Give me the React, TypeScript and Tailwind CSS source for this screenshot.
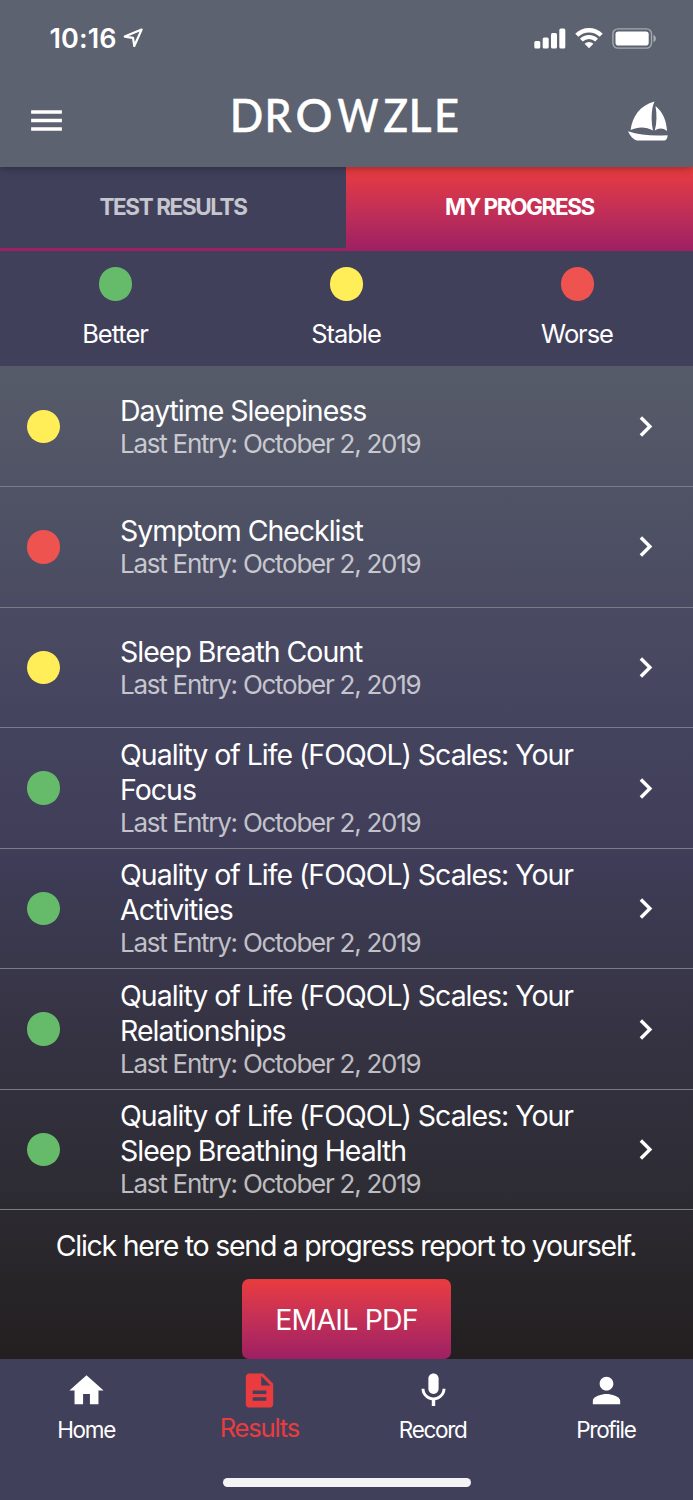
import type { ReactNode } from "react";
import { MdChevronRight, MdDescription, MdHome, MdMenu, MdMic, MdPerson } from "react-icons/md";
import { clsx } from "clsx";

type Status = "better" | "stable" | "worse";

interface Entry {
    title: string;
    date: string;
    status: Status;
}

const dotColors: Record<Status, string> = {
    better: "bg-[#66bb6a]",
    stable: "bg-[#ffee58]",
    worse: "bg-[#ef5350]",
};

const entries: Entry[] = [
    { title: "Daytime Sleepiness", date: "October 2, 2019", status: "stable" },
    { title: "Symptom Checklist", date: "October 2, 2019", status: "worse" },
    { title: "Sleep Breath Count", date: "October 2, 2019", status: "stable" },
    { title: "Quality of Life (FOQOL) Scales: Your Focus", date: "October 2, 2019", status: "better" },
    { title: "Quality of Life (FOQOL) Scales: Your Activities", date: "October 2, 2019", status: "better" },
    { title: "Quality of Life (FOQOL) Scales: Your Relationships", date: "October 2, 2019", status: "better" },
    { title: "Quality of Life (FOQOL) Scales: Your Sleep Breathing Health", date: "October 2, 2019", status: "better" },
];

function Dot({ status }: { status: Status }) {
    return <span className={clsx("block size-[33.6px] shrink-0 rounded-full", dotColors[status])} />;
}

function StatusBar() {
    return (
        <div className="flex h-[76px] items-center justify-between pl-[49.5px] pr-[36px]">
            <div className="flex items-center gap-[6px]">
                <span className="text-[27px] font-semibold leading-none tracking-[0.1px]">10:16</span>
                <svg width="20" height="20" viewBox="0 0 20 20" fill="none">
                    <path d="M18.6 1.6 L1.8 8.6 L10 9.9 L11.3 18 Z" stroke="white" strokeWidth="2.2" strokeLinejoin="round" />
                </svg>
            </div>
            <div className="flex items-center">
                <svg width="32" height="21" viewBox="0 0 32 21" fill="white">
                    <rect x="0.3" y="13" width="6" height="7.5" rx="1.5" />
                    <rect x="8.7" y="9.5" width="6" height="11" rx="1.5" />
                    <rect x="17" y="5" width="6" height="15.5" rx="1.5" />
                    <rect x="25.3" y="0.5" width="6" height="20" rx="1.5" />
                </svg>
                <svg className="ml-[9px]" width="28" height="21" viewBox="0 0 28 21" fill="none" stroke="white">
                    <path d="M1.8 7.3 A17.3 17.3 0 0 1 26.2 7.3" strokeWidth="4.4" />
                    <path d="M6.4 12.2 A10.8 10.8 0 0 1 21.6 12.2" strokeWidth="4" />
                    <path d="M14 20.2 L9.6 15.8 A6.2 6.2 0 0 1 18.4 15.8 Z" fill="white" stroke="none" />
                </svg>
                <svg className="ml-[9px]" width="45" height="21" viewBox="0 0 45 21">
                    <rect x="0.9" y="0.9" width="38.6" height="19.2" rx="5" fill="none" stroke="white" strokeOpacity="0.45" strokeWidth="1.4" />
                    <rect x="3.5" y="3.5" width="33.2" height="14" rx="2.8" fill="white" />
                    <path d="M41.5 7 C44.6 8 44.6 13 41.5 14 Z" fill="white" fillOpacity="0.5" />
                </svg>
            </div>
        </div>
    );
}

function Wordmark() {
    return (
        <svg width="240" height="74" viewBox="-4 -10 240 74" className="font-['Lato',sans-serif] text-[46px] font-medium" fill="white" stroke="white" strokeWidth="0.5">
            <text y="39.2">
                <tspan x="-1.2" textLength="33.5" lengthAdjust="spacingAndGlyphs">D</tspan>
                <tspan x="33.5" textLength="27" lengthAdjust="spacingAndGlyphs">R</tspan>
                <tspan x="64.5" textLength="37" lengthAdjust="spacingAndGlyphs">O</tspan>
                <tspan x="106.5" textLength="41" lengthAdjust="spacingAndGlyphs">W</tspan>
                <tspan x="152.5" textLength="24.5" lengthAdjust="spacingAndGlyphs">Z</tspan>
                <tspan x="177.5" textLength="23" lengthAdjust="spacingAndGlyphs">L</tspan>
                <tspan x="203" textLength="25" lengthAdjust="spacingAndGlyphs">E</tspan>
            </text>
        </svg>
    );
}

function Sailboat() {
    return (
        <svg width="40" height="40" viewBox="0 0 40 40" fill="white">
            <path d="M26.5 0.5 C23 8 23 20 25 29.5 C18 25.5 10 25.5 2.6 29 C4.5 15 12 4.5 26.5 0.5 Z" />
            <path d="M27.5 5 C35 11 38.5 20 39 30 C35 26.5 30.5 26.8 26.8 29.5 C28.8 22 29 13 27.5 5 Z" />
            <path d="M0 30.2 C12 34.5 26 35 39.6 34.2 C39.6 36.5 38.5 39.5 36 39.5 L9 39.5 C5 38.5 2 34.5 0 30.2 Z" />
        </svg>
    );
}

function Header() {
    return (
        <header className="relative z-10 h-[167px] bg-[#5c626f] shadow-[0_2px_8px_rgba(0,0,0,0.3)]">
            <StatusBar />
            <div className="flex items-start pl-[26.4px] pr-[25.5px]">
                <MdMenu className="mt-[24px] size-[41px]" />
                <div className="ml-[160px] mt-[7px]">
                    <Wordmark />
                </div>
                <div className="ml-auto mt-[25px]">
                    <Sailboat />
                </div>
            </div>
        </header>
    );
}

function Tabs() {
    return (
        <div className="flex h-[84px] text-[22.5px] font-bold leading-none tracking-[-1.4px]">
            <button className="w-[346px] border-b-[3px] border-[#9e1f63] bg-[#41405b] pb-[1px] text-[#c6c6ce]">TEST RESULTS</button>
            <button className="flex-1 bg-linear-to-b from-[#ea3c3e] to-[#9e1f63] pb-[4px]">MY PROGRESS</button>
        </div>
    );
}

function Legend() {
    const items: { label: string; status: Status }[] = [
        { label: "Better", status: "better" },
        { label: "Stable", status: "stable" },
        { label: "Worse", status: "worse" },
    ];

    return (
        <div className="flex h-[115px] bg-[#41405b] pt-[16.3px]">
            {items.map((item) => (
                <div key={item.label} className="flex flex-1 flex-col items-center">
                    <Dot status={item.status} />
                    <span className="mr-[1px] mt-[17px] text-[25.5px] leading-[32px] tracking-[-1.05px]">{item.label}</span>
                </div>
            ))}
        </div>
    );
}

function EntryRow({ entry }: { entry: Entry }) {
    return (
        <li className="flex h-[120.55px] items-center border-b border-[#7b7a88] pl-[26.8px] pr-[27px]">
            <Dot status={entry.status} />
            <div className="ml-[59.7px] w-[480px]">
                <div className="text-[28.5px] leading-[35px] tracking-[-1.03px]">{entry.title}</div>
                <div className="text-[26px] leading-[32.6px] tracking-[-1.26px] text-white/70">Last Entry: {entry.date}</div>
            </div>
            <MdChevronRight className="ml-auto size-[41px] shrink-0" />
        </li>
    );
}

function NavItem({ icon, label, active }: { icon: ReactNode; label: string; active?: boolean }) {
    return (
        <button className={clsx("flex flex-1 flex-col items-center pt-[11px]", active && "text-[#ea3c3e]")}>
            {icon}
            <span
                className={clsx(
                    "mr-[1px] leading-[28px]",
                    active ? "mt-[2.5px] text-[25.5px] tracking-[-1.15px]" : "mt-[5px] text-[22.5px] tracking-[-1.3px]"
                )}
            >
                {label}
            </span>
        </button>
    );
}

export default function App() {
    return (
        <div className="flex h-[1500px] w-[693px] flex-col overflow-hidden bg-[#231f20] font-['Inter','Liberation_Sans',sans-serif] text-white">
            <Header />
            <Tabs />
            <Legend />

            <main className="flex h-[993px] flex-col bg-[linear-gradient(to_bottom,#565b69_0%,#45445f_35%,#3f3d58_49%,#39374a_60%,#2c2a31_85%,#231f20_100%)]">
                <ul className="pt-[0.6px]">
                    {entries.map((entry) => (
                        <EntryRow key={entry.title} entry={entry} />
                    ))}
                </ul>
                <div className="flex flex-1 flex-col items-center">
                    <p className="mr-[1px] mt-[17.5px] text-[28.5px] leading-[35px] tracking-[-1.26px]">Click here to send a progress report to yourself.</p>
                    <button className="mt-auto h-[80px] w-[209px] rounded-[7px] bg-linear-to-b from-[#ea3c3e] to-[#9e1f63] pt-[2px] text-[28.5px] tracking-[-0.8px]">
                        EMAIL PDF
                    </button>
                </div>
            </main>

            <footer className="flex h-[141px] flex-col items-center bg-[#41405b]">
                <nav className="flex w-full">
                    <NavItem icon={<MdHome className="size-[41px]" />} label="Home" />
                    <NavItem icon={<MdDescription className="size-[41px]" />} label="Results" active />
                    <NavItem icon={<MdMic className="size-[41px]" />} label="Record" />
                    <NavItem icon={<MdPerson className="size-[41px]" />} label="Profile" />
                </nav>
                {/* Home indicator */}
                <div className="mb-[13.5px] mt-auto h-[8.5px] w-[248px] rounded-full bg-[#f4f4f4]" />
            </footer>
        </div>
    );
}
